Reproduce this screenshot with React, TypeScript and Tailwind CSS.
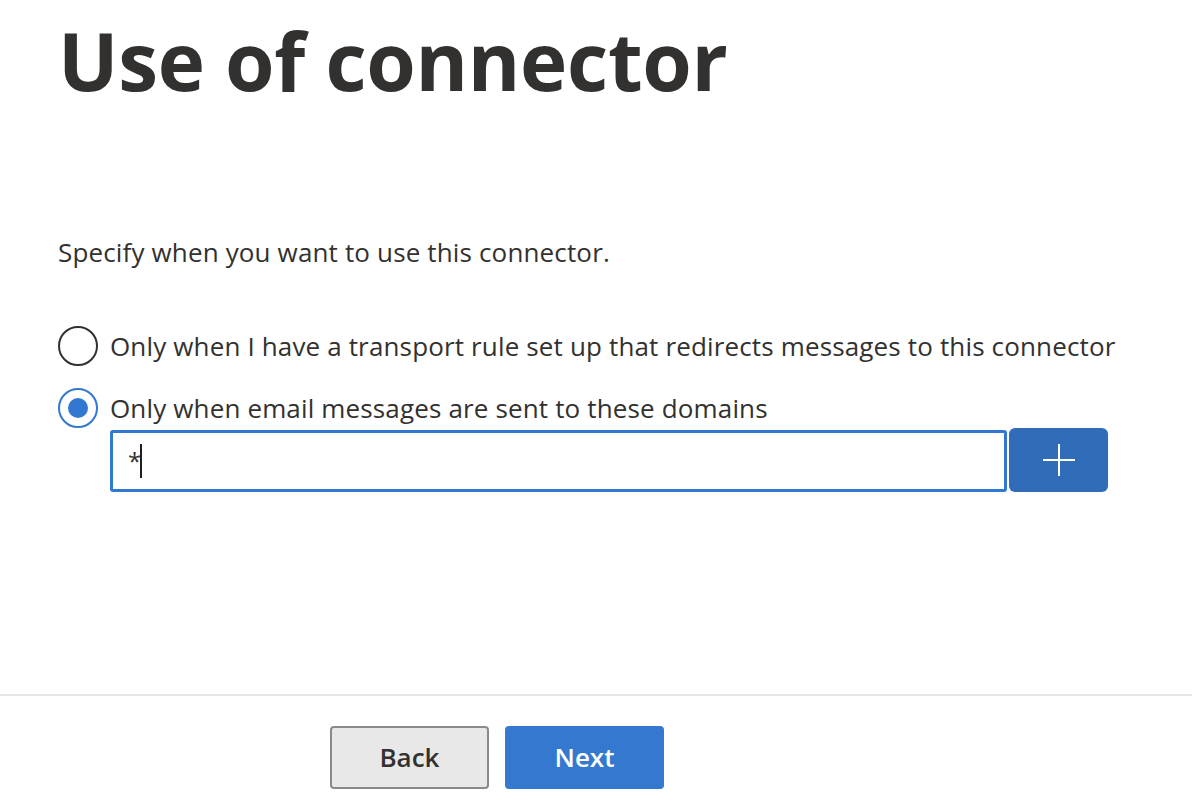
import { useState } from 'react';

export default function App() {
  const [choice, setChoice] = useState<'rule' | 'domains'>('domains');
  const [domain, setDomain] = useState('*');

  return (
    <div
      className="w-[1192px] h-[802px] bg-white text-[#323130] overflow-hidden flex flex-col"
      style={{ fontFamily: '"Open Sans", "Noto Sans", sans-serif' }}
    >
      <div className="flex-1 pl-[58px]">
        {/* Title */}
        <h1 className="text-[80px] font-bold leading-none mt-[20px] tracking-[-0.3px]">Use of connector</h1>

        <p className="text-[26px] mt-[136px] leading-[32px] tracking-[0.15px]">Specify when you want to use this connector.</p>

        {/* Options */}
        <div className="mt-[58px] flex flex-col gap-[22px]">
          <label className="flex items-center gap-[12px] cursor-pointer" onClick={() => setChoice('rule')}>
            <span
              className={`w-[40px] h-[40px] rounded-full border-2 flex items-center justify-center ${
                choice === 'rule' ? 'border-[#3277d0]' : 'border-[#323130]'
              }`}
            >
              {choice === 'rule' && <span className="w-[20px] h-[20px] rounded-full bg-[#3277d0]" />}
            </span>
            <span className="text-[26px] leading-[40px] tracking-[0.15px]">
              Only when I have a transport rule set up that redirects messages to this connector
            </span>
          </label>

          <div>
            <label className="flex items-center gap-[12px] cursor-pointer" onClick={() => setChoice('domains')}>
              <span
                className={`w-[40px] h-[40px] rounded-full border-2 flex items-center justify-center ${
                  choice === 'domains' ? 'border-[#3277d0]' : 'border-[#323130]'
                }`}
              >
                {choice === 'domains' && <span className="w-[20px] h-[20px] rounded-full bg-[#3277d0]" />}
              </span>
              <span className="text-[26px] leading-[40px] tracking-[0.15px]">Only when email messages are sent to these domains</span>
            </label>

            <div className="flex items-stretch ml-[52px] mt-[2px] w-[998px]">
              <div className="flex-1 h-[62px] border-[3px] border-[#3277d0] rounded-[3px] px-[15px] flex items-center">
                <input
                  value={domain}
                  onChange={(e) => setDomain(e.target.value)}
                  className="w-[12px] text-[24px] outline-none text-[#323130] bg-transparent"
                />
                <span className="w-[2px] h-[34px] bg-[#201f1e]" />
              </div>
              <button className="w-[99px] h-[64px] -mt-[2px] ml-[2px] bg-[#306cb8] rounded-[6px] flex items-center justify-center">
                <svg width="34" height="34" viewBox="0 0 34 34">
                  <path d="M17 1v32M1 17h32" stroke="white" strokeWidth="2" fill="none" />
                </svg>
              </button>
            </div>
          </div>
        </div>
      </div>

      {/* Footer */}
      <div className="border-t-2 border-[#e6e6e6] h-[108px] flex items-start pl-[330px] pt-[30px] gap-[16px]">
        <button className="w-[159px] h-[63px] bg-[#e8e8e8] border-2 border-[#8a8a8a] rounded-[4px] text-[26px] font-semibold text-[#323130]">
          Back
        </button>
        <button className="w-[159px] h-[63px] bg-[#3478cf] rounded-[4px] text-[26px] font-semibold text-white">
          Next
        </button>
      </div>
    </div>
  );
}
